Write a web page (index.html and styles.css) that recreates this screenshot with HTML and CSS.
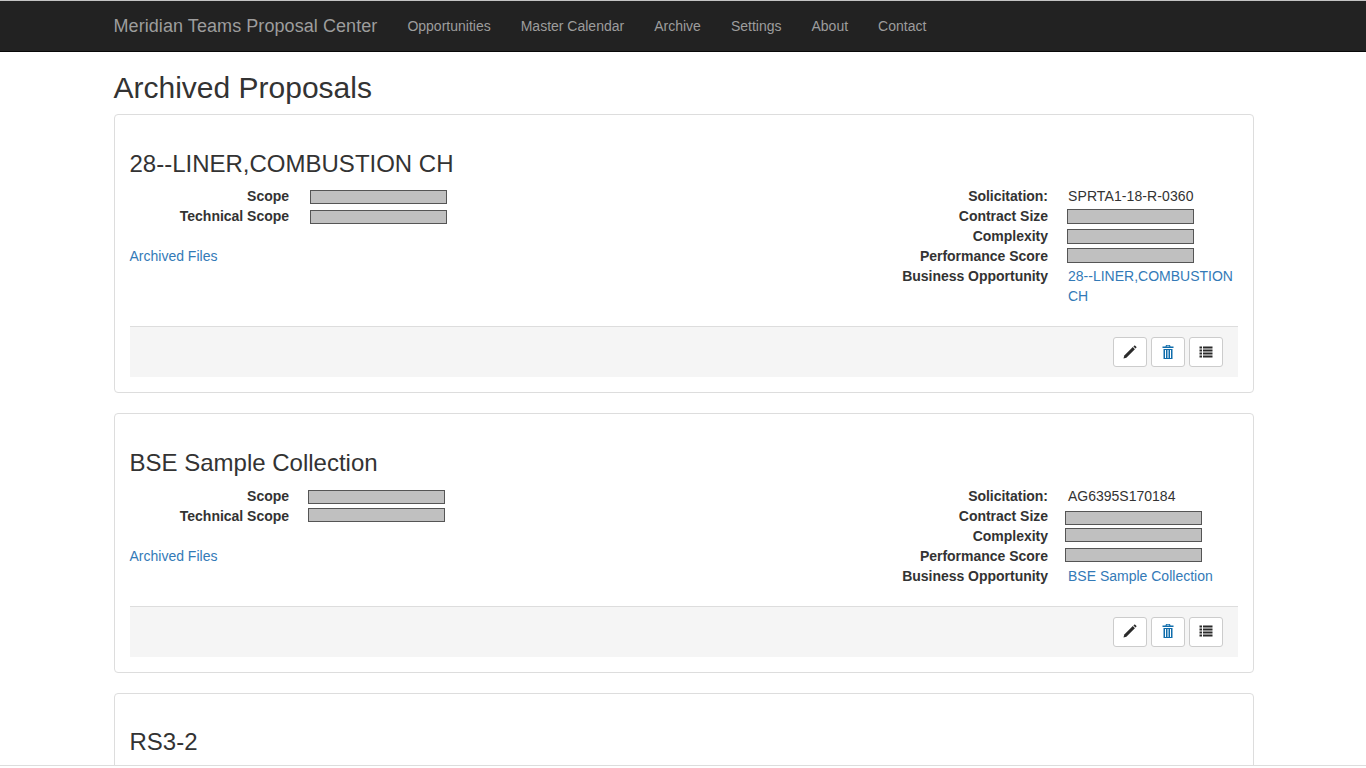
FILE: index.html
```html
<!DOCTYPE html>
<html lang="en">
<head>
<meta charset="utf-8">
<title>Archived Proposals</title>
<link rel="stylesheet" href="styles.css">
</head>
<body>
<div class="page">
  <nav class="navbar">
    <div class="container nav-inner">
      <a class="brand">Meridian Teams Proposal Center</a>
      <a class="nav-link">Opportunities</a>
      <a class="nav-link">Master Calendar</a>
      <a class="nav-link">Archive</a>
      <a class="nav-link">Settings</a>
      <a class="nav-link">About</a>
      <a class="nav-link">Contact</a>
    </div>
  </nav>
  <main class="container">
    <h2 class="page-title">Archived Proposals</h2>

    <section class="card">
      <h3 class="card-title">28--LINER,COMBUSTION CH</h3>
      <div class="columns">
        <div class="col-left">
          <div class="row"><div class="label label-left">Scope</div><div class="value-left"><div class="bar bar-left mt4"></div></div></div>
          <div class="row"><div class="label label-left">Technical Scope</div><div class="value-left"><div class="bar bar-left mt4"></div></div></div>
          <div class="row"></div>
          <div class="row"><a class="link link-left">Archived Files</a></div>
        </div>
        <div class="col-right">
          <div class="row"><div class="label label-right">Solicitation:</div><div class="value-right code">SPRTA1-18-R-0360</div></div>
          <div class="row"><div class="label label-right">Contract Size</div><div class="value-right"><div class="bar bar-narrow mt3"></div></div></div>
          <div class="row"><div class="label label-right">Complexity</div><div class="value-right"><div class="bar bar-narrow mt3"></div></div></div>
          <div class="row"><div class="label label-right">Performance Score</div><div class="value-right"><div class="bar bar-narrow mt2"></div></div></div>
          <div class="row"><div class="label label-right">Business Opportunity</div><div class="value-right"><a class="link">28--LINER,COMBUSTION CH</a></div></div>
        </div>
      </div>
      <div class="actions">
        <button class="btn" type="button" aria-label="Edit"><svg class="icon" viewBox="0 0 14 14"><path class="ink" d="M0.500 13.500l0.800-2.900 8.500-8.500 2.100 2.100-8.500 8.500z"/><path class="ink" d="M10.400 1.500l0.800-0.800c0.300-0.300 0.700-0.300 1 0l1.100 1.100c0.300 0.300 0.300 0.700 0 1l-0.800 0.800z"/></svg></button>
        <button class="btn" type="button" aria-label="Delete"><svg class="icon" viewBox="0 0 14 14"><path class="blue" d="M5 0h4l0.500 1.500h3v1.500H1.500V1.500h3zM5.700 0.800v0.700h2.600V0.800z" fill-rule="evenodd"/><path class="blue" d="M2.500 4h9v10h-9zM4 5v8h1V5zM6.500 5v8h1V5zM9 5v8h1V5z" fill-rule="evenodd"/></svg></button>
        <button class="btn" type="button" aria-label="Details"><svg class="icon" viewBox="0 0 14 14"><path class="ink" d="M0.500 1.500h2.500v2H0.500zM4 1.500h9.500v2H4zM0.500 4.500h2.500v2H0.500zM4 4.500h9.500v2H4zM0.500 7.500h2.500v2H0.500zM4 7.500h9.500v2H4zM0.500 10.500h2.500v2H0.500zM4 10.500h9.500v2H4z"/></svg></button>
      </div>
    </section>

    <section class="card">
      <h3 class="card-title">BSE Sample Collection</h3>
      <div class="columns">
        <div class="col-left">
          <div class="row"><div class="label label-left">Scope</div><div class="value-left"><div class="bar bar-left shift-left mt4"></div></div></div>
          <div class="row"><div class="label label-left">Technical Scope</div><div class="value-left"><div class="bar bar-left shift-left mt2"></div></div></div>
          <div class="row"></div>
          <div class="row"><a class="link link-left">Archived Files</a></div>
        </div>
        <div class="col-right">
          <div class="row"><div class="label label-right">Solicitation:</div><div class="value-right">AG6395S170184</div></div>
          <div class="row"><div class="label label-right">Contract Size</div><div class="value-right"><div class="bar bar-wide mt5"></div></div></div>
          <div class="row"><div class="label label-right">Complexity</div><div class="value-right"><div class="bar bar-wide mt2"></div></div></div>
          <div class="row"><div class="label label-right">Performance Score</div><div class="value-right"><div class="bar bar-wide mt2"></div></div></div>
          <div class="row"><div class="label label-right">Business Opportunity</div><div class="value-right"><a class="link">BSE Sample Collection</a></div></div>
        </div>
      </div>
      <div class="actions">
        <button class="btn" type="button" aria-label="Edit"><svg class="icon" viewBox="0 0 14 14"><path class="ink" d="M0.500 13.500l0.800-2.900 8.500-8.500 2.100 2.100-8.500 8.500z"/><path class="ink" d="M10.400 1.500l0.800-0.800c0.300-0.300 0.700-0.300 1 0l1.100 1.100c0.300 0.300 0.300 0.700 0 1l-0.800 0.800z"/></svg></button>
        <button class="btn" type="button" aria-label="Delete"><svg class="icon" viewBox="0 0 14 14"><path class="blue" d="M5 0h4l0.500 1.500h3v1.500H1.500V1.500h3zM5.700 0.800v0.700h2.600V0.800z" fill-rule="evenodd"/><path class="blue" d="M2.500 4h9v10h-9zM4 5v8h1V5zM6.500 5v8h1V5zM9 5v8h1V5z" fill-rule="evenodd"/></svg></button>
        <button class="btn" type="button" aria-label="Details"><svg class="icon" viewBox="0 0 14 14"><path class="ink" d="M0.500 1.500h2.500v2H0.500zM4 1.500h9.500v2H4zM0.500 4.500h2.500v2H0.500zM4 4.500h9.500v2H4zM0.500 7.500h2.500v2H0.500zM4 7.500h9.500v2H4zM0.500 10.500h2.500v2H0.500zM4 10.500h9.500v2H4z"/></svg></button>
      </div>
    </section>

    <section class="card">
      <h3 class="card-title">RS3-2</h3>
    </section>
  </main>
</div>
</body>
</html>
```
FILE: styles.css
```css
* { box-sizing: border-box; }
html, body { margin: 0; padding: 0; height: 768px; overflow: hidden; background: #fff; }
body { font-family: "Liberation Sans", Arial, sans-serif; font-size: 14px; line-height: 20px; color: #333; }
.page { height: 766px; overflow: hidden; border-bottom: 1px solid #ddd; }
.container { width: 1140px; margin-left: 114px; }
.navbar { height: 52px; background: #222; border-top: 1px solid #c4c4c4; border-bottom: 1px solid #080808; }
.nav-inner { display: flex; align-items: center; height: 50px; }
.brand { font-size: 18px; color: #9d9d9d; margin-left: -0.5px; margin-right: 15px; letter-spacing: 0.07px; }
.nav-link { color: #9d9d9d; padding: 0 15px; }
.page-title { font-size: 30px; font-weight: 500; line-height: 33px; margin: 19px 0 10px -0.5px; }
.card { border: 1px solid #ddd; border-radius: 4px; padding: 15px; margin-bottom: 20px; background: #fff; }
.card-title { font-size: 24px; font-weight: 500; line-height: 26.4px; margin: 20.6px 0 9.4px -0.5px; }
.columns { display: flex; justify-content: space-between; margin-bottom: 20px; }
.col-left { width: 340px; }
.col-right { width: 378px; margin-left: auto; }
.row { display: flex; min-height: 20px; }
.label { font-weight: 700; text-align: right; letter-spacing: -0.02px; }
.label-left { width: 159px; margin-right: 1px; }
.label-right { width: 188px; margin-right: 20px; flex: none; }
.value-left { margin-left: 20px; }
.value-right { width: 170px; }
.code { letter-spacing: 0.1px; }
.link { color: #337ab7; }
.link-left { margin-left: -0.5px; }
.bar { background: #c0c0c0; border: 1px solid #555; }
.bar-left { width: 137px; height: 14px; }
.shift-left { margin-left: -2px; }
.bar-narrow { width: 127px; height: 15px; margin-left: -1px; }
.bar-wide { width: 137px; height: 14px; margin-left: -3px; }
.mt2 { margin-top: 2px; }
.mt3 { margin-top: 3px; }
.mt4 { margin-top: 4px; }
.mt5 { margin-top: 5px; }
.actions { display: flex; justify-content: flex-end; gap: 4px; padding: 10px 15px; background: #f5f5f5; border-top: 1px solid #ddd; }
.btn { width: 34px; height: 30px; padding: 0 1px 1px 0; display: flex; align-items: center; justify-content: center; background: #fff; border: 1px solid #ccc; border-radius: 3px; }
.icon { width: 14px; height: 14px; display: block; }
.ink { fill: #2a2a2a; }
.blue { fill: #0f6cab; }
```
